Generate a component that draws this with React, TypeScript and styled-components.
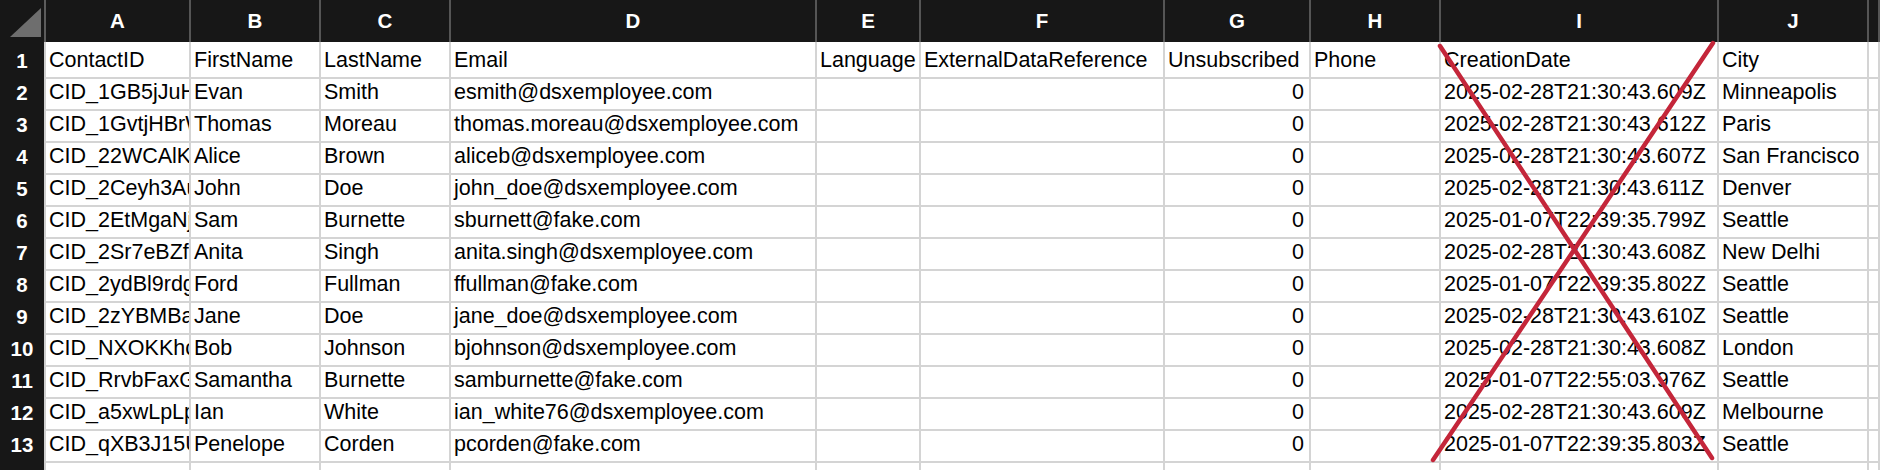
import React from "react";
import styled, { createGlobalStyle } from "styled-components";

const GlobalStyle = createGlobalStyle`
  html, body { margin: 0; padding: 0; background: #ffffff; }
  body { font-family: "Liberation Sans", Arial, sans-serif; }
`;

type Align = "left" | "right";
interface Column { key: string; width: string; align?: Align; clip?: boolean; }

const columns: Column[] = [
  { key: "A", width: "145px", clip: true },
  { key: "B", width: "130px" },
  { key: "C", width: "130px" },
  { key: "D", width: "366px" },
  { key: "E", width: "104px" },
  { key: "F", width: "244px" },
  { key: "G", width: "146px", align: "right" },
  { key: "H", width: "130px" },
  { key: "I", width: "278px" },
  { key: "J", width: "150px" },
  { key: "K", width: "1fr" },
];

const template = `46px ${columns.map((c) => c.width).join(" ")}`;

const header = ["ContactID", "FirstName", "LastName", "Email", "Language", "ExternalDataReference", "Unsubscribed", "Phone", "CreationDate", "City", ""];

const rows: string[][] = [
  ["CID_1GB5jJuHk2pQxR", "Evan", "Smith", "esmith@dsxemployee.com", "", "", "0", "", "2025-02-28T21:30:43.609Z", "Minneapolis", ""],
  ["CID_1GvtjHBrW8mZtL", "Thomas", "Moreau", "thomas.moreau@dsxemployee.com", "", "", "0", "", "2025-02-28T21:30:43.612Z", "Paris", ""],
  ["CID_22WCAlKs9TfVbn", "Alice", "Brown", "aliceb@dsxemployee.com", "", "", "0", "", "2025-02-28T21:30:43.607Z", "San Francisco", ""],
  ["CID_2Ceyh3AuQ7pLmc", "John", "Doe", "john_doe@dsxemployee.com", "", "", "0", "", "2025-02-28T21:30:43.611Z", "Denver", ""],
  ["CID_2EtMgaNjR4vXwe", "Sam", "Burnette", "sburnett@fake.com", "", "", "0", "", "2025-01-07T22:39:35.799Z", "Seattle", ""],
  ["CID_2Sr7eBZfK1nDoy", "Anita", "Singh", "anita.singh@dsxemployee.com", "", "", "0", "", "2025-02-28T21:30:43.608Z", "New Delhi", ""],
  ["CID_2ydBl9rdgH3sPa", "Ford", "Fullman", "ffullman@fake.com", "", "", "0", "", "2025-01-07T22:39:35.802Z", "Seattle", ""],
  ["CID_2zYBMBaQc6tEuw", "Jane", "Doe", "jane_doe@dsxemployee.com", "", "", "0", "", "2025-02-28T21:30:43.610Z", "Seattle", ""],
  ["CID_NXOKKhcV5yJrbz", "Bob", "Johnson", "bjohnson@dsxemployee.com", "", "", "0", "", "2025-02-28T21:30:43.608Z", "London", ""],
  ["CID_RrvbFaxGm2WkhS", "Samantha", "Burnette", "samburnette@fake.com", "", "", "0", "", "2025-01-07T22:55:03.976Z", "Seattle", ""],
  ["CID_a5xwLpLpZ8qNfe", "Ian", "White", "ian_white76@dsxemployee.com", "", "", "0", "", "2025-02-28T21:30:43.609Z", "Melbourne", ""],
  ["CID_qXB3J15UoT4dGi", "Penelope", "Corden", "pcorden@fake.com", "", "", "0", "", "2025-01-07T22:39:35.803Z", "Seattle", ""],
  ["", "", "", "", "", "", "", "", "", "", ""],
];

const Sheet = styled.div`
  position: relative;
  width: 1880px;
  height: 470px;
  overflow: hidden;
  background: #ffffff;
  font-size: 21.5px;
  color: #000000;
`;

const HeaderRow = styled.div`
  display: grid;
  grid-template-columns: ${template};
  height: 42px;
  background: #171717;
`;

const Corner = styled.div`
  position: relative;
  border-right: 2px solid #5c5c5c;
`;

const ColLetter = styled.div`
  display: flex;
  align-items: center;
  justify-content: center;
  color: #ffffff;
  font-size: 20.5px;
  font-weight: 700;
  border-right: 2px solid #555555;
  line-height: 42px;
`;

const Row = styled.div<{ $first?: boolean }>`
  display: grid;
  grid-template-columns: ${template};
  height: ${(p) => (p.$first ? 34 : 32)}px;
`;

const RowNum = styled.div<{ $first?: boolean }>`
  background: #171717;
  color: #ffffff;
  font-size: 20.5px;
  font-weight: 700;
  text-align: center;
  border-right: 2px solid #cfcfcf;
  border-bottom: 2px solid #5a5a5a;
  padding-top: ${(p) => (p.$first ? 2 : 0)}px;
  line-height: 33px;
  overflow: hidden;
`;

const Cell = styled.div<{ $align?: Align; $clip?: boolean; $first?: boolean }>`
  border-right: 2px solid #d4d4d4;
  border-bottom: 2px solid #d4d4d4;
  padding: ${(p) => (p.$first ? 2 : 0)}px 5px 0 3px;
  white-space: nowrap;
  text-align: ${(p) => p.$align ?? "left"};
  line-height: 33px;
  overflow: ${(p) => (p.$clip ? "hidden" : "visible")};
  min-width: 0;
`;

const Overlay = styled.svg`
  position: absolute;
  left: 0;
  top: 0;
  pointer-events: none;
`;

export default function App() {
  return (
    <>
      <GlobalStyle />
      <Sheet>
        <HeaderRow>
          <Corner>
            <svg width="44" height="42" style={{ display: "block" }}>
              <polygon points="10,37 41,8 41,37" fill="#6e6e6e" />
            </svg>
          </Corner>
          {columns.map((c) => (
            <ColLetter key={c.key}>{c.key === "K" ? "" : c.key}</ColLetter>
          ))}
        </HeaderRow>
        {[header, ...rows].map((r, i) => (
          <Row key={i} $first={i === 0}>
            <RowNum $first={i === 0}>{i + 1}</RowNum>
            {r.map((v, j) => (
              <Cell
                key={j}
                $first={i === 0}
                $clip={columns[j].clip}
                $align={i > 0 ? columns[j].align : "left"}
              >
                {v}
              </Cell>
            ))}
          </Row>
        ))}
        <Overlay width="1880" height="470" viewBox="0 0 1880 470">
          <line x1="1440" y1="46" x2="1712" y2="458" stroke="#c4263a" strokeWidth="4.5" strokeLinecap="round" />
          <line x1="1713" y1="43" x2="1433" y2="460" stroke="#c4263a" strokeWidth="4.5" strokeLinecap="round" />
        </Overlay>
      </Sheet>
    </>
  );
}
